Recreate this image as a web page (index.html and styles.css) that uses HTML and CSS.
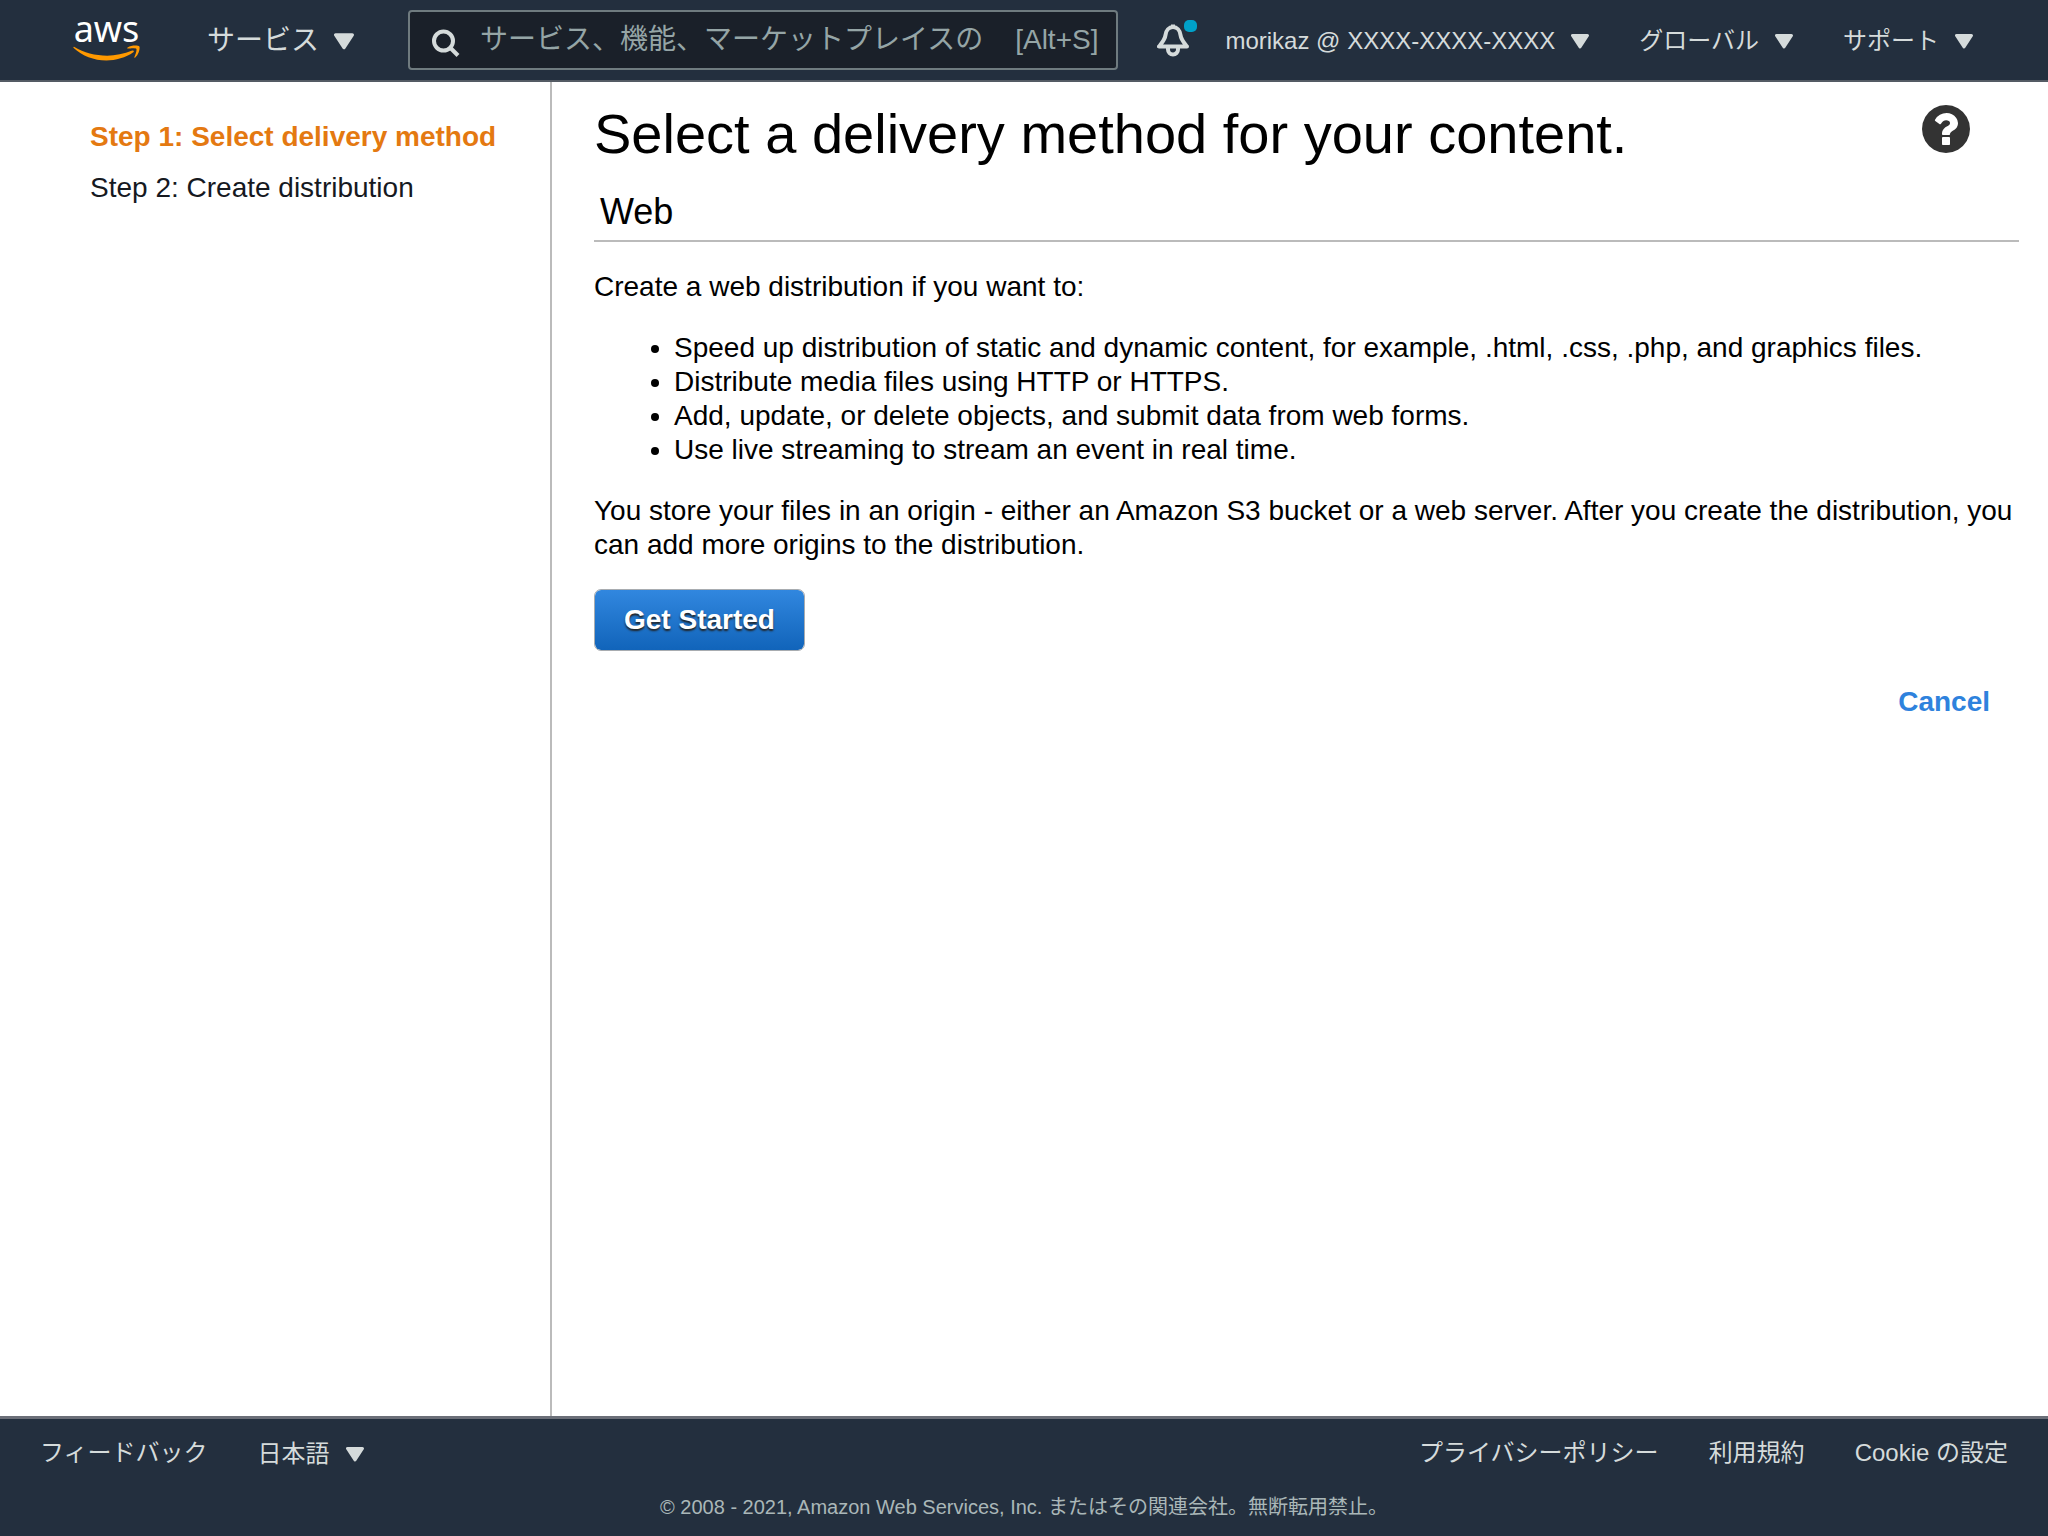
FILE: index.html
```html
<!DOCTYPE html>
<html lang="ja">
<head>
  <meta charset="UTF-8">
  <meta name="viewport" content="width=device-width, initial-scale=1.0">
  <title>AWS CloudFront</title>
  <link rel="stylesheet" href="styles.css">
</head>
<body>
  <header class="nav">
    <a class="logo" href="#" aria-label="aws">
      <span class="logo-text">aws</span>
      <svg class="logo-smile" viewBox="0 112 304 70">
        <path d="M273.5,143.7c-32.9,24.3-80.7,37.2-121.8,37.2c-57.6,0-109.5-21.3-148.7-56.7c-3.1-2.8-0.3-6.6,3.4-4.4c42.4,24.6,94.7,39.5,148.8,39.5c36.5,0,76.6-7.6,113.5-23.2C274.2,133.6,278.9,139.7,273.5,143.7z"/>
        <path d="M287.2,128.1c-4.2-5.4-27.8-2.6-38.5-1.3c-3.2,0.4-3.7-2.4-0.8-4.5c18.8-13.2,49.7-9.4,53.3-5c3.6,4.5-1,35.4-18.6,50.2c-2.7,2.3-5.3,1.1-4.1-1.9C282.5,155.7,291.4,133.4,287.2,128.1z"/>
      </svg>
    </a>
    <button class="menu menu-services" type="button">サービス
      <svg class="caret" viewBox="0 0 18 15"><path d="M1.5 1.5h15L9 13z"/></svg>
    </button>
    <div class="search">
      <svg class="search-icon" viewBox="0 0 28 28"><circle cx="11.5" cy="12" r="9.5"/><path d="M18 18.5l8 8"/></svg>
      <input type="text" id="search" aria-label="検索" placeholder="サービス、機能、マーケットプレイスの">
      <label for="search">[Alt+S]</label>
    </div>
    <button class="bell" type="button" aria-label="通知">
      <svg viewBox="0 0 32 33">
        <path d="M16 3C12 3 9 6.5 8.5 11C8 15.5 6 17.5 2 22.5H30C26 17.5 24 15.5 23.5 11C23 6.5 20 3 16 3z"/>
        <path d="M16 0.5V3M11 22.5v3a5 5 0 0 0 10 0v-3"/>
      </svg>
      <span class="dot"></span>
    </button>
    <button class="menu menu-account" type="button">morikaz @ XXXX-XXXX-XXXX
      <svg class="caret" viewBox="0 0 18 15"><path d="M1.5 1.5h15L9 13z"/></svg>
    </button>
    <button class="menu" type="button">グローバル
      <svg class="caret" viewBox="0 0 18 15"><path d="M1.5 1.5h15L9 13z"/></svg>
    </button>
    <button class="menu" type="button">サポート
      <svg class="caret" viewBox="0 0 18 15"><path d="M1.5 1.5h15L9 13z"/></svg>
    </button>
  </header>

  <div class="page">
    <nav class="steps">
      <div class="step active">Step 1: Select delivery method</div>
      <div class="step">Step 2: Create distribution</div>
    </nav>
    <main class="content">
      <div class="title">
        <h1>Select a delivery method for your content.</h1>
        <button class="help" type="button" aria-label="Help">
          <svg viewBox="128 128 1536 1536"><path d="M1024 1376v-192q0-14-9-23t-23-9h-192q-14 0-23 9t-9 23v192q0 14 9 23t23 9h192q14 0 23-9t9-23zm256-672q0-88-55.5-163t-138.5-116-170-41q-243 0-371 213-15 24 8 42l132 100q7 6 19 6 16 0 25-12 53-68 86-92 34-24 86-24 48 0 85.5 26t37.5 59q0 38-20 61t-68 45q-63 28-115.5 86.5t-52.5 125.5v36q0 14 9 23t23 9h192q14 0 23-9t9-23q0-19 21.5-49.5t54.5-49.5q32-18 49-28.5t46-35 44.5-48 28-60.5 12.5-81zm384 192q0 209-103 385.5t-279.5 279.5-385.5 103-385.5-103-279.5-279.5-103-385.5 103-385.5 279.5-279.5 385.5-103 385.5 103 279.5 279.5 103 385.5z"/></svg>
        </button>
      </div>
      <h2>Web</h2>
      <p>Create a web distribution if you want to:</p>
      <ul>
        <li>Speed up distribution of static and dynamic content, for example, .html, .css, .php, and graphics files.</li>
        <li>Distribute media files using HTTP or HTTPS.</li>
        <li>Add, update, or delete objects, and submit data from web forms.</li>
        <li>Use live streaming to stream an event in real time.</li>
      </ul>
      <p>You store your files in an origin - either an Amazon S3 bucket or a web server. After you create the distribution, you can add more origins to the distribution.</p>
      <button class="start" type="button">Get Started</button>
      <div class="actions"><a href="#">Cancel</a></div>
    </main>
  </div>

  <footer class="footer">
    <div class="footer-links">
      <a href="#">フィードバック</a>
      <button class="menu" type="button">日本語
        <svg class="caret" viewBox="0 0 18 15"><path d="M1.5 1.5h15L9 13z"/></svg>
      </button>
      <a class="privacy" href="#">プライバシーポリシー</a>
      <a href="#">利用規約</a>
      <a href="#">Cookie の設定</a>
    </div>
    <div class="copyright">© 2008 - 2021, Amazon Web Services, Inc. またはその関連会社。無断転用禁止。</div>
  </footer>
</body>
</html>
```
FILE: styles.css
```css
* {
  box-sizing: border-box;
}
body {
  margin: 0;
  min-height: 100vh;
  display: flex;
  flex-direction: column;
  font-family: "Liberation Sans", Arial, "Noto Sans CJK JP", sans-serif;
  font-size: 28px;
  line-height: 34px;
  color: #000000;
  background-color: #ffffff;
}
button,
input {
  font: inherit;
  color: inherit;
  padding: 0;
  border: none;
  background: none;
}
button {
  cursor: pointer;
}
a {
  color: inherit;
  text-decoration: none;
}
svg {
  display: block;
  flex: none;
}

/* top bar */
.nav {
  display: flex;
  align-items: center;
  height: 82px;
  padding: 0 75px 0 73px;
  background-color: #232f3e;
  border-bottom: 2px solid #545b64;
  color: #d5dbdb;
  font-size: 24px;
  white-space: nowrap;
}
.logo {
  width: 67px;
  margin-right: 67px;
  text-align: center;
}
.logo-text {
  display: block;
  margin-bottom: 6px;
  font-family: "Noto Sans", sans-serif;
  font-size: 36px;
  line-height: 20px;
  color: #ffffff;
}
.logo-smile {
  width: 67px;
  height: 16px;
  fill: #ff9900;
}
.menu {
  display: flex;
  align-items: center;
  gap: 16px;
  margin-left: 50px;
  padding-top: 2px;
}
.caret {
  width: 18px;
  height: 15px;
  fill: #d5dbdb;
  stroke: #d5dbdb;
  stroke-width: 3;
  stroke-linejoin: round;
}
.menu-services {
  gap: 15px;
  margin: 0 54px 0 0;
  font-size: 28px;
}
.menu-services .caret {
  width: 20px;
  height: 17px;
}
.menu-account {
  margin-left: 36px;
}
.search {
  flex: 1;
  display: flex;
  align-items: center;
  height: 60px;
  padding: 0 18px 0 22px;
  background-color: #1a2029;
  border: 2px solid #6f7b7f;
  border-radius: 4px;
  color: #95a5a6;
  font-size: 28px;
}
.search-icon {
  width: 28px;
  height: 28px;
  margin: 6px 20px 0 0;
  fill: none;
  stroke: #d5dbdb;
  stroke-width: 4;
}
.search input {
  flex: 1;
  min-width: 0;
  outline: none;
}
.search input::placeholder {
  color: #95a5a6;
  opacity: 1;
}
.bell {
  position: relative;
  margin-left: 39px;
}
.bell svg {
  width: 32px;
  height: 33px;
  fill: none;
  stroke: #d5dbdb;
  stroke-width: 4;
  stroke-linejoin: round;
}
.dot {
  position: absolute;
  top: -4px;
  right: -8px;
  width: 13px;
  height: 12px;
  border-radius: 5px;
  background-color: #00a1c9;
}

/* wizard */
.page {
  flex: 1;
  display: flex;
}
.steps {
  flex: none;
  width: 552px;
  padding: 38px 20px 20px 90px;
  border-right: 2px solid #bbbbbb;
  color: #16191f;
}
.step {
  margin-bottom: 17px;
}
.step.active {
  color: #e47911;
  font-weight: bold;
}
.content {
  flex: 1;
  padding: 18px 29px 40px 42px;
}
.title {
  display: flex;
  justify-content: space-between;
  align-items: flex-start;
}
h1 {
  margin: 0 0 22px;
  font-size: 56px;
  font-weight: normal;
  line-height: 68px;
}
.help {
  margin: 5px 49px 0 0;
}
.help svg {
  width: 48px;
  height: 48px;
  fill: #333333;
}
h2 {
  margin: 0 0 28px;
  padding: 0 6px 6px;
  border-bottom: 2px solid #bbbbbb;
  font-size: 36px;
  font-weight: normal;
  line-height: 44px;
}
p,
ul {
  margin: 0 0 27px;
}
ul {
  padding-left: 80px;
}
.start {
  height: 62px;
  padding: 0 29px;
  border: 1px solid #a8acb0;
  border-radius: 7px;
  background: linear-gradient(#3187df, #1164ba) padding-box;
  color: #ffffff;
  font-weight: bold;
  text-shadow: 0 2px 2px #222222;
}
.actions {
  margin: 34px 29px 0 0;
  text-align: right;
}
.actions a {
  color: #2e82dd;
  font-weight: bold;
}

/* bottom bar */
.footer {
  padding: 16px 40px 12px;
  background-color: #232f3e;
  border-top: 3px solid #6b6f78;
  color: #d5dbdb;
  font-size: 24px;
}
.footer-links {
  display: flex;
  align-items: center;
  gap: 50px;
  margin-bottom: 19px;
}
.footer-links .menu {
  margin: 0;
}
.privacy {
  margin-left: auto;
}
.copyright {
  text-align: center;
  color: #aab7b8;
  font-size: 20px;
}
```
